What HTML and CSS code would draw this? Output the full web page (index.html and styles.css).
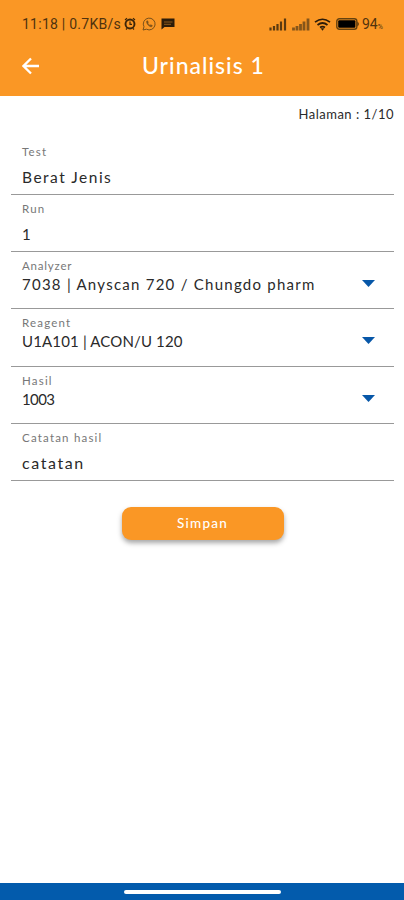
FILE: index.html
```html
<!DOCTYPE html>
<html lang="id">
<head>
    <meta charset="utf-8">
    <title>Urinalisis 1</title>
    <link rel="stylesheet" href="styles.css">
</head>
<body>
<header class="header">
    <div class="status">
        <span class="status-text">11:18 | 0.7KB/s</span>
        <svg class="alarm" width="12" height="14" viewBox="0 0 12 14"><circle cx="6" cy="7" r="4.5" fill="none" stroke="#3b2509" stroke-width="1.9"/><path d="M6 4.5V7.3H8M1 3L3 1.3M11 3L9 1.3M2 12.5L3 11.3M10 12.5L9 11.3" fill="none" stroke="#3b2509" stroke-width="1.2"/></svg>
        <svg class="wa" width="14" height="14" viewBox="0 0 14 14"><path d="M1 13L2 9.8A5.9 5.9 0 1 1 4.4 12.2Z" fill="none" stroke="#78501b"/><path d="M4.7 4C3.8 6 7 10 9.7 9.8L10.4 8.6L8.8 7.7L8 8.4C7 8 6.2 7.1 5.8 6.1L6.3 5.4L5.7 3.8Z" fill="#78501b" stroke="#78501b" stroke-width=".5"/></svg>
        <svg class="chat" width="14" height="12" viewBox="0 0 14 12"><path d="M.5 .5H13.5V9H3.5L.5 11.5Z" fill="#2c1c09"/><path d="M3 4H11.5M3 6.3H10" stroke="#a56a21" stroke-width=".8"/></svg>
        <div class="status-right">
            <svg width="18" height="13" viewBox="0 0 18 13"><path d="M1.5 9.5V12.5M5 8V12.5M8.5 6V12.5M12 3.5V12.5M16 .5V12.5" stroke="#5b3a10" stroke-width="2.2"/></svg>
            <svg class="signal" width="18" height="13" viewBox="0 0 18 13"><path d="M1.5 9.5V12.5M5 8V12.5M8.5 6V12.5M12 3.5V12.5M16 .5V12.5" stroke="#84551a" stroke-width="2.8"/></svg>
            <svg class="wifi" width="17" height="13" viewBox="0 0 17 13"><path d="M1 4.2Q8.5 -1.7 16 4.2M3.5 7Q8.5 3 13.5 7M6 9.5Q8.5 7.6 11 9.5" fill="none" stroke="#2c1c09" stroke-width="1.7"/><path d="M6.7 10.2H10.3L8.5 12.7Z" fill="#2c1c09"/></svg>
            <svg class="battery" width="24" height="12" viewBox="0 0 24 12"><rect x=".8" y=".8" width="20" height="10.4" rx="2.5" fill="none" stroke="#65420f" stroke-width="1.4"/><rect x="2.2" y="2.2" width="17.2" height="7.6" rx="1" fill="#000"/><path d="M21.5 3.5Q24 6 21.5 8.5Z" fill="#3b2509"/></svg>
            <span class="percent">94<small>%</small></span>
        </div>
    </div>
    <div class="toolbar">
        <svg class="back" width="18" height="18" viewBox="0 0 18 18"><path d="M17 9H2M9 1.5L1.5 9L9 16.5" fill="none" stroke="#fff" stroke-width="2.3"/></svg>
        <h1 class="title">Urinalisis 1</h1>
    </div>
</header>
<main class="content">
    <p class="page-number">Halaman : 1/10</p>
    <form class="form">
        <div class="field">
            <span class="label">Test</span>
            <span class="value berat">Berat Jenis</span>
        </div>
        <div class="field">
            <span class="label">Run</span>
            <span class="value">1</span>
        </div>
        <div class="field select">
            <span class="label analyzer">Analyzer</span>
            <span class="value device">7038 | Anyscan 720 / Chungdo pharm</span>
            <svg class="arrow" width="13" height="7" viewBox="0 0 13 7"><path d="M0 0H13L6.5 7Z"/></svg>
        </div>
        <div class="field select">
            <span class="label">Reagent</span>
            <span class="value acon">U1A101 | ACON/U 120</span>
            <svg class="arrow" width="13" height="7" viewBox="0 0 13 7"><path d="M0 0H13L6.5 7Z"/></svg>
        </div>
        <div class="field select">
            <span class="label">Hasil</span>
            <span class="value number">1003</span>
            <svg class="arrow" width="13" height="7" viewBox="0 0 13 7"><path d="M0 0H13L6.5 7Z"/></svg>
        </div>
        <div class="field">
            <span class="label">Catatan hasil</span>
            <span class="value catatan">catatan</span>
        </div>
        <button class="submit" type="button">Simpan</button>
    </form>
</main>
<footer class="nav-bar"><div class="nav-handle"></div></footer>
</body>
</html>
```
FILE: styles.css
```css
* {
    box-sizing: border-box;
    margin: 0;
    padding: 0;
}
body {
    display: flex;
    flex-direction: column;
    height: 900px;
    overflow: hidden;
    background: #fff;
    color: #2a2a2a;
    font-family: Lato, sans-serif;
    white-space: nowrap;
}
svg {
    display: block;
    flex: none;
}
.header {
    height: 95.5px;
    background: #fa9725;
}
.status {
    display: flex;
    align-items: center;
    height: 48px;
    padding: 0 19px 0 22px;
    color: #50330e;
    font-family: Roboto, sans-serif;
    font-size: 14px;
}
.status-text {
    width: 102px;
    letter-spacing: .25px;
}
.wa {
    margin-left: 6px;
}
.chat {
    margin-left: 5px;
}
.status-right {
    display: flex;
    align-items: center;
    margin-left: auto;
}
.signal {
    margin-left: 5px;
}
.wifi {
    margin-left: 4px;
}
.battery {
    margin-left: 5px;
}
.percent {
    width: 23px;
    margin-left: 2px;
}
.percent small {
    font-size: 7px;
}
.toolbar {
    display: flex;
    align-items: center;
    height: 36px;
    padding-left: 22px;
}
.title {
    margin: -3px 0 0 102px;
    color: #fff;
    font-size: 23px;
    font-weight: 500;
    letter-spacing: 1px;
}
.content {
    flex: 1;
    padding: 8px 10px 0 11px;
}
.page-number {
    height: 34px;
    font-size: 13px;
    line-height: 20px;
    letter-spacing: .5px;
    text-align: right;
}
.form {
    display: flex;
    flex-direction: column;
}
.field {
    display: grid;
    grid-template-columns: 1fr 13px;
    grid-template-rows: 16px 20px;
    row-gap: 7px;
    height: 57.3px;
    padding: 6px 19px 0 11px;
    border-bottom: 1px solid #999;
}
.field.select {
    row-gap: 0;
}
.label {
    grid-column: 1 / 3;
    color: #777;
    font-size: 11.5px;
    line-height: 16px;
    letter-spacing: 1.2px;
}
.analyzer {
    letter-spacing: .8px;
}
.value {
    font-size: 15px;
    line-height: 20px;
}
.berat {
    font-size: 15.5px;
    letter-spacing: 1.5px;
}
.device {
    letter-spacing: 1.25px;
}
.acon {
    letter-spacing: .15px;
}
.number {
    letter-spacing: -.6px;
}
.catatan {
    font-size: 16px;
    letter-spacing: 1.6px;
}
.arrow {
    margin-top: 6px;
    fill: #0757a8;
}
.submit {
    align-self: center;
    width: 162px;
    height: 33px;
    margin-top: 25.5px;
    border: 0;
    border-radius: 9px;
    background: #fa9725;
    box-shadow: 0 3px 5px rgba(0, 0, 0, .35);
    color: #fff;
    font-family: Lato, sans-serif;
    font-size: 13.5px;
    font-weight: 500;
    letter-spacing: 1.2px;
}
.nav-bar {
    display: flex;
    justify-content: center;
    height: 17px;
    padding: 7px 0 0 1px;
    background: #035bac;
}
.nav-handle {
    width: 157px;
    height: 4px;
    border-radius: 2px;
    background: #fff;
}
```
